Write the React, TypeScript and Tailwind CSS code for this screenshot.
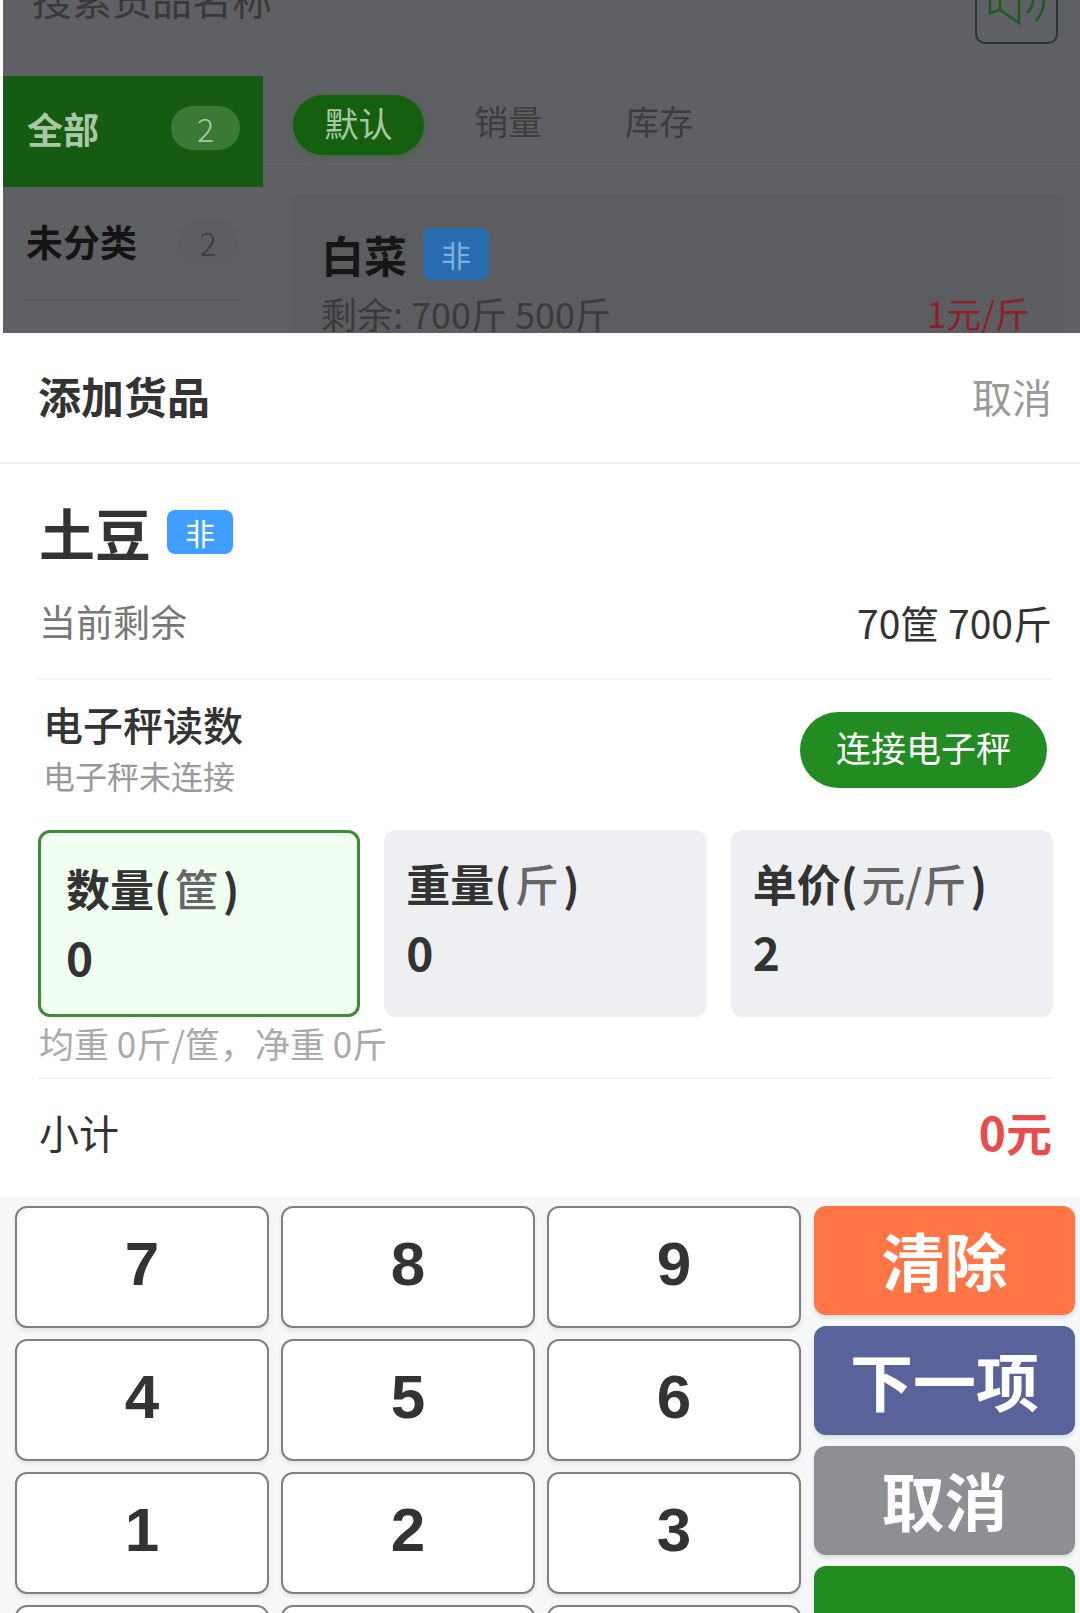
const CJK = "font-['Noto_Sans_CJK_SC','Noto_Sans',sans-serif]"

function Tag({ className }: { className: string }) {
  return (
    <span className={`flex items-center justify-center rounded-lg ${className}`}>非</span>
  )
}

function EntryCard({ name, unit, value, active }: { name: string; unit: string; value: string; active?: boolean }) {
  return (
    <div
      className={
        active
          ? 'h-[187px] rounded-xl border-[3px] border-[#3f8a38] bg-[#f0fff0] pl-[25px] pt-[25px]'
          : 'h-[187px] rounded-xl bg-[#eeeff3] pl-[22px] pt-[23px]'
      }
    >
      <div className="text-[44px] font-bold leading-[60px] text-[#333]">
        {name}(<span className="px-[4px] font-medium text-[#666]">{unit}</span>)
      </div>
      <div className="mt-[8px] text-[46px] font-bold leading-[60px] text-[#333]">{value}</div>
    </div>
  )
}

function Key({ label }: { label?: string }) {
  return (
    <div className="flex h-[122px] items-center justify-center rounded-xl border-2 border-[#808080] bg-white pb-[8px] font-['Liberation_Sans',sans-serif] text-[62px] font-bold text-[#333] shadow-[0_3px_4px_rgba(0,0,0,0.08)]">
      {label}
    </div>
  )
}

function ActionButton({ label, className }: { label?: string; className: string }) {
  return (
    <div className={`flex h-[109px] shrink-0 items-center justify-center rounded-xl pb-[3px] text-[63px] font-bold text-white shadow-[0_3px_4px_rgba(0,0,0,0.1)] ${className}`}>
      {label}
    </div>
  )
}

export default function App() {
  return (
    <div className={`flex h-[1613px] w-[1080px] flex-col overflow-hidden bg-white ${CJK}`}>
      {/* Dimmed page behind the sheet */}
      <div className="h-[333px] shrink-0 overflow-hidden bg-white pl-[3px]">
        <div className="h-full bg-[#5f6063]">
          <div className="flex h-[76px] justify-between pl-[29px] pr-[22px]">
            <div className="-mt-[32px] text-[40px] leading-[60px] text-[#38393b]">搜索货品名称</div>
            <div className="-mt-[20px] flex h-[64px] w-[83px] items-end rounded-[10px] border-2 border-[#2b362e]">
              <svg width="79" height="42" viewBox="0 0 79 42" fill="none" stroke="#1b5a20" strokeWidth="2.5">
                <path d="M13 0V13L23 10L42 23V0M23 0V10" />
                <path d="M56 0C56 5 54 9 50 13M67 0C67 8 64 15 59 21" />
              </svg>
            </div>
          </div>
          <div className="flex">
            <div className="w-[260px] shrink-0">
              <div className="flex h-[111px] items-center justify-between bg-[#155c12] pb-[8px] pl-[24px] pr-[23px] text-[#a9c7a5]">
                <span className="text-[36px] font-bold">全部</span>
                <span className="flex h-[44px] w-[69px] items-center justify-center rounded-full bg-[#3a7a36] text-[32px] font-light">2</span>
              </div>
              <div className="mx-[18px] flex h-[113px] items-center justify-between border-b border-[#58595c] pb-[2px] pl-[5px] pr-[7px]">
                <span className="text-[37px] font-bold text-[#141414]">未分类</span>
                <span className="flex h-[44px] w-[60px] items-center justify-center rounded-full bg-[#5d5e61] text-[32px] font-light text-[#3c3d3f]">2</span>
              </div>
            </div>
            <div className="min-w-0 flex-1">
              <div className="flex h-[89px] items-start gap-[29px] border-b-2 border-[#626367] pl-[30px] pt-[19px]">
                <span className="flex h-[60px] w-[131px] items-center justify-center rounded-full bg-[#14600f] pb-[6px] text-[34px] text-[#a9c7a5] shadow-[0_2px_6px_rgba(40,110,40,0.5)]">默认</span>
                <span className="px-[21px] py-[6px] text-[34px] leading-[40px] text-[#3c3d3f]">销量</span>
                <span className="pl-[33px] py-[6px] text-[34px] leading-[40px] text-[#3c3d3f]">库存</span>
              </div>
              <div className="ml-[27px] mr-[17px] mt-[30px] h-[160px] rounded-t-lg bg-[#5c5d60] pl-[31px] pr-[33px] pt-[33px]">
                <div className="flex items-center gap-[16px]">
                  <span className="text-[43px] font-bold leading-[52px] text-[#161616]">白菜</span>
                  <Tag className="h-[52px] w-[66px] bg-[#2a6cb0] text-[30px] text-[#7fb0dc]" />
                </div>
                <div className="mt-[13px] flex justify-between leading-[40px]">
                  <span className="text-[36px] text-[#3a3b3d]">剩余: 700斤 500斤</span>
                  <span className="text-[35px] text-[#8e1f2a]">1元/斤</span>
                </div>
              </div>
            </div>
          </div>
        </div>
      </div>

      {/* Sheet */}
      <div className="flex h-[131px] shrink-0 items-center justify-between border-b-2 border-[#f0f0f0] pb-[4px] pl-[38px] pr-[28px]">
        <span className="text-[43px] font-bold text-[#333]">添加货品</span>
        <span className="text-[40px] text-[#999]">取消</span>
      </div>
      <div className="shrink-0 pl-[39px] pr-[28px]">
        <div className="mt-[36px] flex h-[64px] items-center gap-[16px]">
          <span className="text-[56px] font-bold leading-[64px] text-[#333]">土豆</span>
          <Tag className="h-[44px] w-[66px] bg-[#409eff] text-[30px] text-white" />
        </div>
        <div className="mt-[34px] flex h-[48px] items-center justify-between">
          <span className="text-[37px] text-[#777]">当前剩余</span>
          <span className="text-[39px] text-[#333]">70筐 700斤</span>
        </div>
        <div className="mt-[32px] border-b-2 border-[#f2f2f2]" />
      </div>
      <div className="flex shrink-0 items-start justify-between pl-[43px] pr-[33px] pt-[32px]">
        <div className="-mt-[14px]">
          <div className="text-[40px] font-medium leading-[52px] text-[#333]">电子秤读数</div>
          <div className="mt-[5px] text-[32px] leading-[40px] text-[#999]">电子秤未连接</div>
        </div>
        <div className="flex h-[76px] w-[247px] items-center justify-center rounded-full bg-[#228b22] pb-[6px] text-[35px] text-white">连接电子秤</div>
      </div>
      <div className="mt-[35px] grid shrink-0 grid-cols-3 gap-[24px] pl-[38px] pr-[27px]">
        <EntryCard name="数量" unit="筐" value="0" active />
        <EntryCard name="重量" unit="斤" value="0" />
        <EntryCard name="单价" unit="元/斤" value="2" />
      </div>
      <div className="shrink-0 pl-[39px] pr-[28px]">
        <div className="mt-[7px] text-[35px] leading-[38px] text-[#aaa]">均重 0斤/筐，净重 0斤</div>
        <div className="mt-[15px] border-b-2 border-[#f2f2f2]" />
        <div className="flex h-[118px] items-center justify-between pb-[13px]">
          <span className="text-[40px] text-[#333]">小计</span>
          <span className="text-[46px] font-bold text-[#e84c4c]">0元</span>
        </div>
      </div>

      {/* Keypad */}
      <div className="flex min-h-0 flex-1 gap-[13px] bg-[#f6f7f8] pl-[15px] pr-[5px] pt-[9px]">
        <div className="grid w-[786px] shrink-0 grid-cols-3 content-start gap-x-[12px] gap-y-[11px]">
          {['7', '8', '9', '4', '5', '6', '1', '2', '3', '', '', ''].map((k, i) => (
            <Key key={i} label={k} />
          ))}
        </div>
        <div className="flex flex-1 flex-col gap-[11px]">
          <ActionButton label="清除" className="bg-[#ff7546]" />
          <ActionButton label="下一项" className="bg-[#59639a]" />
          <ActionButton label="取消" className="bg-[#8e8f94]" />
          <ActionButton className="bg-[#228b22]" />
        </div>
      </div>
    </div>
  )
}
